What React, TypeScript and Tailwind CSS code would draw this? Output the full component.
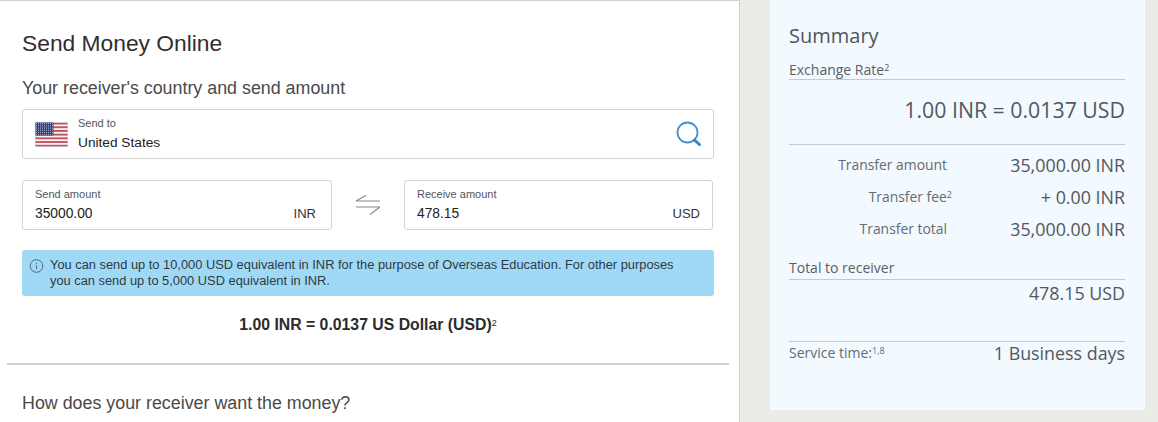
const stripes = [0, 1, 2, 3, 4, 5, 6];
const starRows = [0, 1, 2, 3, 4, 5, 6];
const starCols = [0, 1, 2, 3, 4, 5, 6, 7, 8];

function UsFlag() {
  return (
    <svg width="33" height="25" viewBox="0 0 33 25" className="shrink-0">
      <rect width="33" height="25" fill="#f6f3f3" />
      {stripes.map((i) => (
        <rect key={i} x="0" y={0.6 + i * 3.7} width="33" height="1.85" fill="#c4505c" />
      ))}
      <rect width="18.5" height="13.5" fill="#2f3c78" />
      {starRows.map((r) =>
        starCols.map((c) => (
          <rect key={`${r}-${c}`} x={1 + c * 2} y={1 + r * 1.8} width="0.9" height="0.9" fill="#c9cde0" />
        ))
      )}
      <rect x="0.25" y="0.25" width="32.5" height="24.5" fill="none" stroke="#d8d8d8" strokeWidth="0.5" />
    </svg>
  );
}

function Field({ label, value, unit, className }: { label: string; value: string; unit: string; className: string }) {
  return (
    <div className={`h-[50px] shrink-0 rounded-[3px] border border-[#d3d3d3] bg-white pl-3 pt-[7px] ${className}`}>
      <div className="text-[11px] leading-[12px] text-[#555]">{label}</div>
      <div className="mt-[5px] flex items-center justify-between text-[13.8px] leading-[18px] text-[#222]">
        <span>{value}</span>
        <span className="text-[13px] text-[#333]">{unit}</span>
      </div>
    </div>
  );
}

function SummaryRow({ label, value, sup, mt }: { label: string; value: string; sup?: string; mt: string }) {
  return (
    <div className={`flex items-center ${mt}`}>
      <div className="w-[158px] text-right text-[13.9px] leading-[20px] text-[#666b70]">
        {label}
        {sup && <sup className="-mr-[5px] text-[9px]">{sup}</sup>}
      </div>
      <div className="flex-1 text-right text-[17.85px] leading-[24px] text-[#54585c]">{value}</div>
    </div>
  );
}

export default function App() {
  return (
    <div className="flex h-[422px] w-[1158px] overflow-hidden bg-[#ebebe7] font-['Liberation_Sans',Arial,sans-serif]">
      <div className="h-full w-[740px] shrink-0 border-r border-t border-[#d2d2d2] bg-white pl-[7px] pr-[10px]">
        <div className="px-[15px]">
          <h1 className="mt-[28px] text-[22.8px] leading-[28px] text-[#2f2f2f]">Send Money Online</h1>
          <h2 className="mt-[19px] text-[17.85px] leading-[24px] text-[#4a4a4a]">
            Your receiver's country and send amount
          </h2>

          <div className="mt-[9px] flex h-[50px] items-center rounded-[3px] border border-[#d3d3d3] pl-3 pr-[11px]">
            <UsFlag />
            <div className="ml-[10px] flex-1">
              <div className="text-[11px] leading-[12px] text-[#555]">Send to</div>
              <div className="mt-[5px] text-[13.7px] leading-[18px] text-[#222]">United States</div>
            </div>
            <svg width="26" height="26" viewBox="0 0 26 26" fill="none" className="shrink-0">
              <circle cx="11.5" cy="11.5" r="10" stroke="#4a8fc9" strokeWidth="1.8" />
              <path d="M18.5 19l5 4.5" stroke="#3c85c4" strokeWidth="3" strokeLinecap="round" />
            </svg>
          </div>

          <div className="mt-[21px] flex items-center">
            <Field label="Send amount" value="35000.00" unit="INR" className="w-[310px] pr-[15px]" />
            <div className="flex w-[72px] shrink-0 justify-center">
              <svg width="24" height="20" viewBox="0 0 24 20" fill="none" stroke="#8a8a8a" strokeWidth="1.1">
                <path d="M0 6h24M0 6l10-5.5M0 12h24M24 12l-10 7.5" />
              </svg>
            </div>
            <Field label="Receive amount" value="478.15" unit="USD" className="w-[309px] pr-3" />
          </div>

          <div className="mt-[20px] flex h-[46px] rounded-[3px] bg-[#a0d9f5] pl-[7px] pr-3 pt-[7px] text-[12.85px] leading-[16px] text-[#2e3a42]">
            <svg width="16" height="16" viewBox="0 0 16 16" fill="none" stroke="#5a6a75" strokeWidth="1" className="mt-[1px] shrink-0">
              <circle cx="7.5" cy="8" r="6.3" />
              <path d="M7.5 7.2v4M7.5 4.8v1.2" />
            </svg>
            <p className="ml-[5px]">
              You can send up to 10,000 USD equivalent in INR for the purpose of Overseas Education. For other purposes
              <br />
              you can send up to 5,000 USD equivalent in INR.
            </p>
          </div>

          <div className="mt-[18px] text-center text-[15.8px] font-bold leading-[22px] text-[#2b2b2b]">
            1.00 INR = 0.0137 US Dollar (USD)
            <sup className="text-[9px] font-normal">2</sup>
          </div>
        </div>

        <div className="mt-[27px] h-[2px] bg-[#cfcfcf]" />

        <div className="mt-[26px] px-[15px] text-[17.85px] leading-[24px] text-[#4a4a4a]">
          How does your receiver want the money?
        </div>
      </div>

      <div className="ml-[30px] h-[410px] w-[375px] shrink-0 bg-[#f2f9ff] pl-[19px] pr-[20px] font-['Open_Sans',sans-serif]">
        <div className="mt-[22px] text-[20px] leading-[28px] text-[#50555a]">Summary</div>
        <div className="mt-[10px] border-b border-[#c8c9cc] text-[14px] leading-[19px] text-[#5b5f64]">
          Exchange Rate<sup className="text-[9px]">2</sup>
        </div>
        <div className="mt-[16px] text-right text-[21.3px] leading-[28px] text-[#54585c]">1.00 INR = 0.0137 USD</div>
        <div className="mt-[20px] h-px bg-[#c8c9cc]" />
        <SummaryRow label="Transfer amount" value="35,000.00 INR" mt="mt-[8px]" />
        <SummaryRow label="Transfer fee" value="+ 0.00 INR" sup="2" mt="mt-[8px]" />
        <SummaryRow label="Transfer total" value="35,000.00 INR" mt="mt-[8px]" />
        <div className="mt-[17px] border-b border-[#c8c9cc] pb-[1px] text-[14px] leading-[20px] text-[#5b5f64]">
          Total to receiver
        </div>
        <div className="mt-[1px] text-right text-[17.85px] leading-[24px] text-[#54585c]">478.15 USD</div>
        <div className="mt-[36px] flex items-start justify-between border-t border-[#c8c9cc]">
          <div className="mt-[1px] text-[14px] leading-[20px] text-[#666b70]">
            Service time:<sup className="text-[9px]">1,8</sup>
          </div>
          <div className="text-[17.85px] leading-[22px] text-[#54585c]">1 Business days</div>
        </div>
      </div>
    </div>
  );
}
